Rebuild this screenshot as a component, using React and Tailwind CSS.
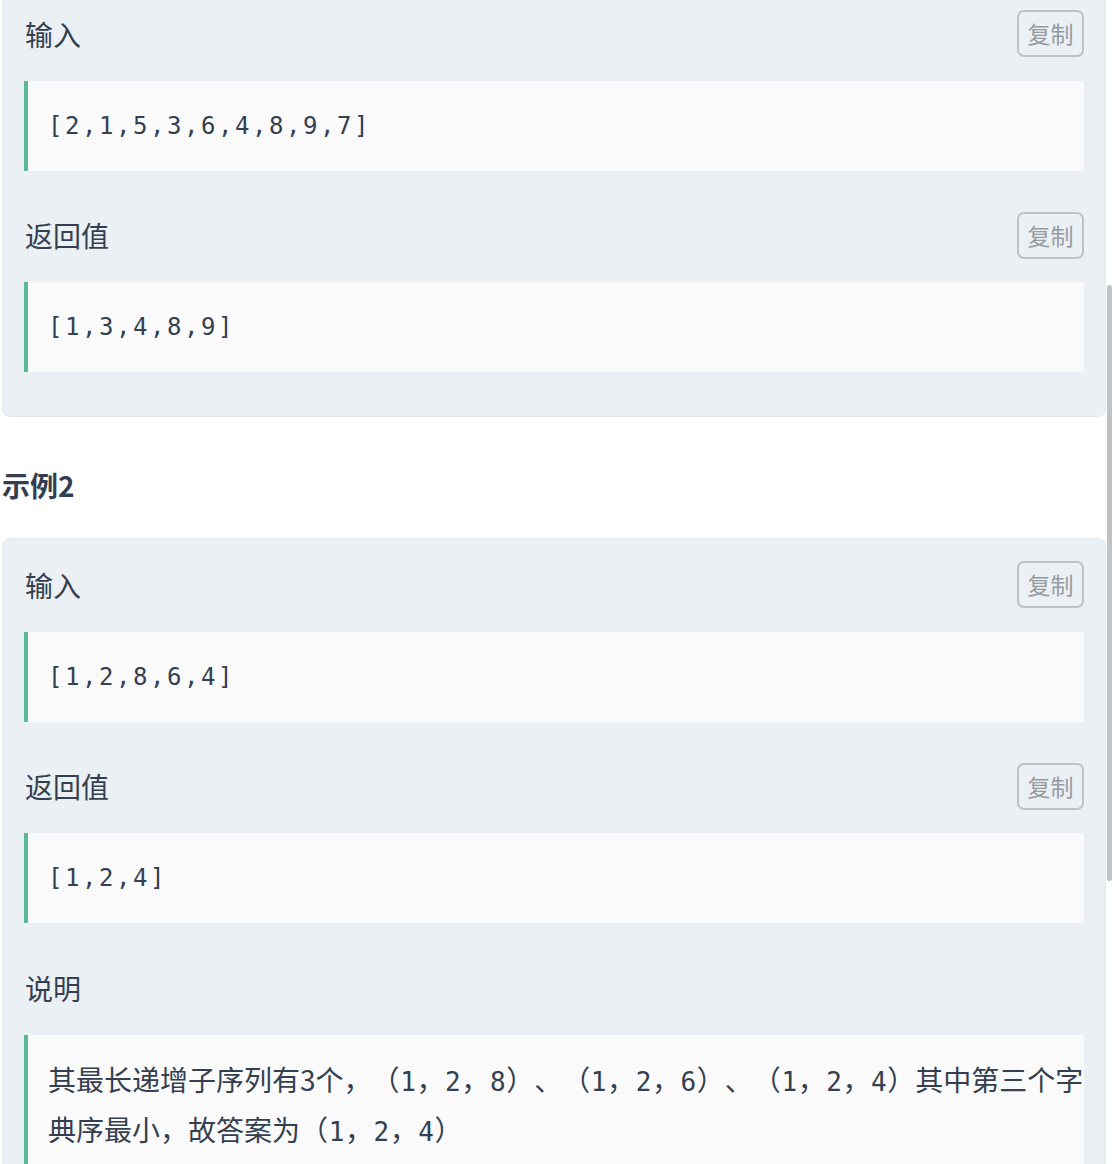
import React from "react";

const sans = { fontFamily: '"Noto Sans CJK SC", "Noto Sans", sans-serif' };

function CopyButton() {
  return (
    <button
      className="flex h-[47px] w-[67px] items-center justify-center rounded-[7px] border-2 border-[#bec2c6] bg-transparent text-[23px] leading-none text-[#959aa0]"
      style={sans}
    >
      复制
    </button>
  );
}

function Header({ label, copy = true }) {
  return (
    <div className="flex h-[47px] items-center justify-between">
      <span className="pl-[1px] text-[28px] leading-none text-[#34404f]" style={sans}>
        {label}
      </span>
      {copy && <CopyButton />}
    </div>
  );
}

function CodeBlock({ children }) {
  return (
    <div className="mt-[23.5px] flex h-[90px] items-center border-l-4 border-[#5ab994] bg-[#fafafa] pl-5">
      <span
        className="text-[24px] leading-none tracking-[2.55px] text-[#34404f]"
        style={{ fontFamily: '"DejaVu Sans Mono", "Liberation Mono", monospace' }}
      >
        {children}
      </span>
    </div>
  );
}

function Section({ label, value, first }) {
  return (
    <div className={first ? "" : "mt-[41px]"}>
      <Header label={label} />
      <CodeBlock>{value}</CodeBlock>
    </div>
  );
}

const mono = { fontFamily: '"DejaVu Sans Mono", "Liberation Mono", monospace' };

function D({ children }) {
  return (
    <span className="px-[0.6px] text-[26px] leading-none" style={mono}>
      {children}
    </span>
  );
}

function Nums({ a, b, c }) {
  return (
    <>
      （<D>{a}</D>，<D>{b}</D>，<D>{c}</D>）
    </>
  );
}

export default function App() {
  return (
    <div className="relative h-[1164px] w-[1112px] overflow-hidden bg-white">
      <div className="ml-[2px] mt-[-13px] w-[1104px]">
        {/* Card 1 */}
        <div className="rounded-[8px] border border-[#e3e8ed] bg-[#ebf0f4] px-[21px] pb-[44px] pt-[22px]">
          <Section first label="输入" value="[2,1,5,3,6,4,8,9,7]" />
          <Section label="返回值" value="[1,3,4,8,9]" />
        </div>

        {/* Heading */}
        <div
          className="mt-[50px] mb-[35px] h-[36px] text-[28px] font-bold leading-[36px] text-[#333e4e]"
          style={sans}
        >
          示例2
        </div>

        {/* Card 2 */}
        <div className="rounded-[8px] border border-[#e3e8ed] bg-[#ebf0f4] px-[21px] pb-[44px] pt-[22px]">
          <Section first label="输入" value="[1,2,8,6,4]" />
          <Section label="返回值" value="[1,2,4]" />
          <div className="mt-[41px]">
            <Header label="说明" copy={false} />
            <div
              className="mt-[23.5px] border-l-4 border-[#5ab994] bg-[#fafafa] pb-[20px] pl-5 pt-[19px] text-[28px] leading-[50px] text-[#34404f] [text-spacing-trim:space-all]"
              style={sans}
            >
              <span className="whitespace-nowrap">
                其最长递增子序列有3个，<Nums a="1" b="2" c="8" />、<Nums a="1" b="2" c="6" />、<Nums a="1" b="2" c="4" />其中第三个字
              </span>
              <br />
              典序最小，故答案为<Nums a="1" b="2" c="4" />
            </div>
          </div>
        </div>
      </div>

      {/* scrollbar thumb */}
      <div className="absolute left-[1107px] top-[285px] h-[596px] w-[5px] rounded-full bg-[#c2c2c2]" />
    </div>
  );
}
